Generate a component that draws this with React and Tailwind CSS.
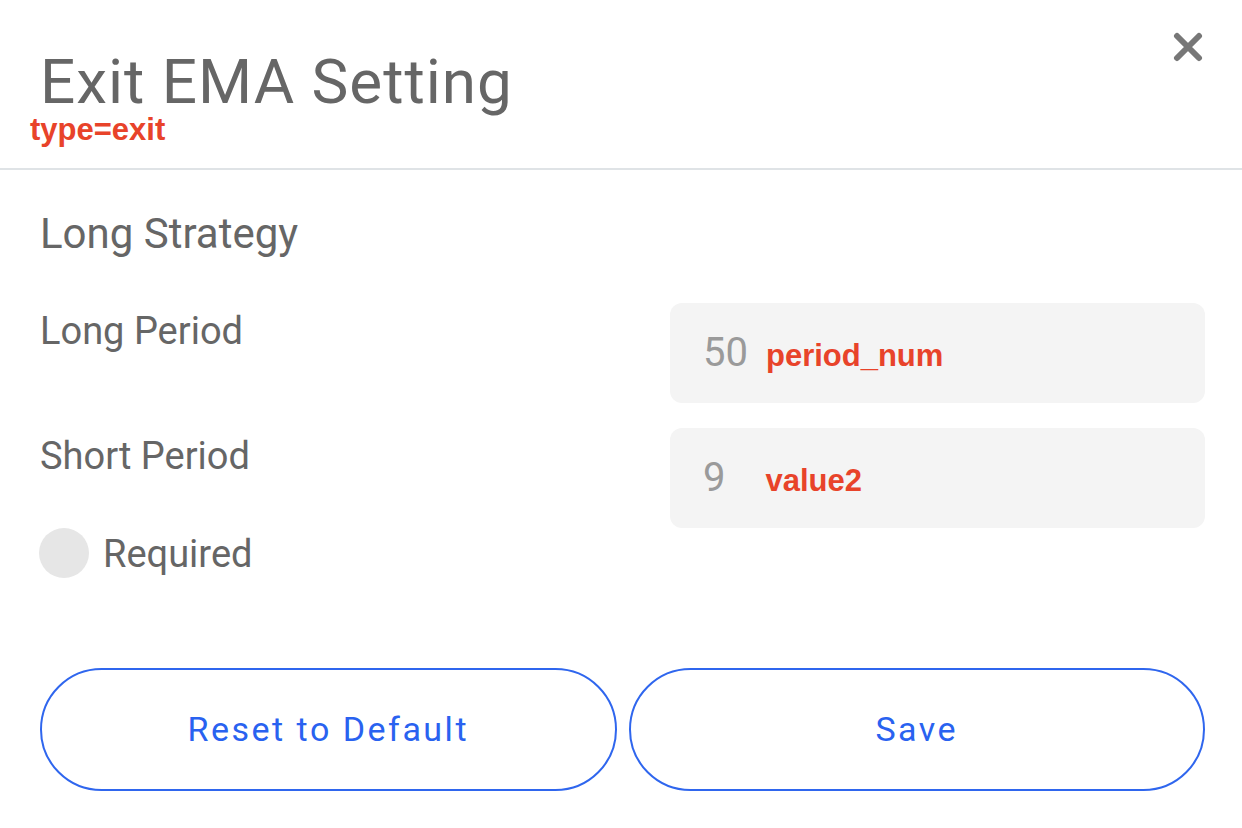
import React from 'react';

const font = { fontFamily: 'Roboto, "Liberation Sans", sans-serif' };

const Field = ({ label, value, tag, tagGap }) => (
  <div className="flex items-start justify-between">
    <div className="pt-[4px] text-[38px] leading-[48px] text-[#666666]">{label}</div>
    <div className="flex h-[100px] w-[535px] items-center rounded-[12px] bg-[#f4f4f4] pl-[33px]">
      <div className="flex items-baseline">
        <span className="text-[40px] leading-none text-[#9a9a9a]">{value}</span>
        <span className={`${tagGap} font-['Liberation_Sans',sans-serif] text-[31px] font-bold leading-none text-[#e8432a]`}>{tag}</span>
      </div>
    </div>
  </div>
);

export default function App() {
  return (
    <div className="relative h-[828px] w-full bg-white" style={font}>
      {/* 헤더 */}
      <div className="h-[170px] border-b-2 border-[#dfe3e6] pl-[40px] pt-[51px]">
        <h1 className="text-[62px] leading-[62px] tracking-[1px] text-[#666666]">Exit EMA Setting</h1>
        <div className="-ml-[10px] mt-[2px] font-['Liberation_Sans',sans-serif] text-[31px] font-bold leading-[30px] text-[#e8432a]">
          type=exit
        </div>
      </div>
      <button className="absolute right-[39px] top-[32px] text-[#777777]">
        <svg width="30" height="30" viewBox="0 0 30 30">
          <path d="M4 4 L26 26 M26 4 L4 26" stroke="currentColor" strokeWidth="6" strokeLinecap="round" />
        </svg>
      </button>

      {/* 본문 */}
      <div className="pl-[40px] pr-[37px]">
        <div className="pt-[40px] text-[42px] leading-[48px] text-[#666666]">Long Strategy</div>
        <div className="mt-[45px] flex flex-col gap-[25px]">
          <Field label="Long Period" value="50" tag="period_num" tagGap="ml-[18px]" />
          <Field label="Short Period" value="9" tag="value2" tagGap="ml-[40px]" />
        </div>
        <div className="-ml-[1px] flex h-[50px] items-start gap-[14px]">
          <div className="h-[50px] w-[50px] rounded-full bg-[#e6e6e6]" />
          <span className="pt-[3px] text-[38px] leading-[47px] text-[#666666]">Required</span>
        </div>
        <div className="mt-[90px] flex gap-[12px]">
          <button className="h-[123px] flex-1 rounded-full border-2 border-[#2f66ee] text-[34px] tracking-[2.5px] text-[#2962f0]">
            Reset to Default
          </button>
          <button className="h-[123px] flex-1 rounded-full border-2 border-[#2f66ee] text-[34px] tracking-[2.5px] text-[#2962f0]">
            Save
          </button>
        </div>
      </div>
    </div>
  );
}
